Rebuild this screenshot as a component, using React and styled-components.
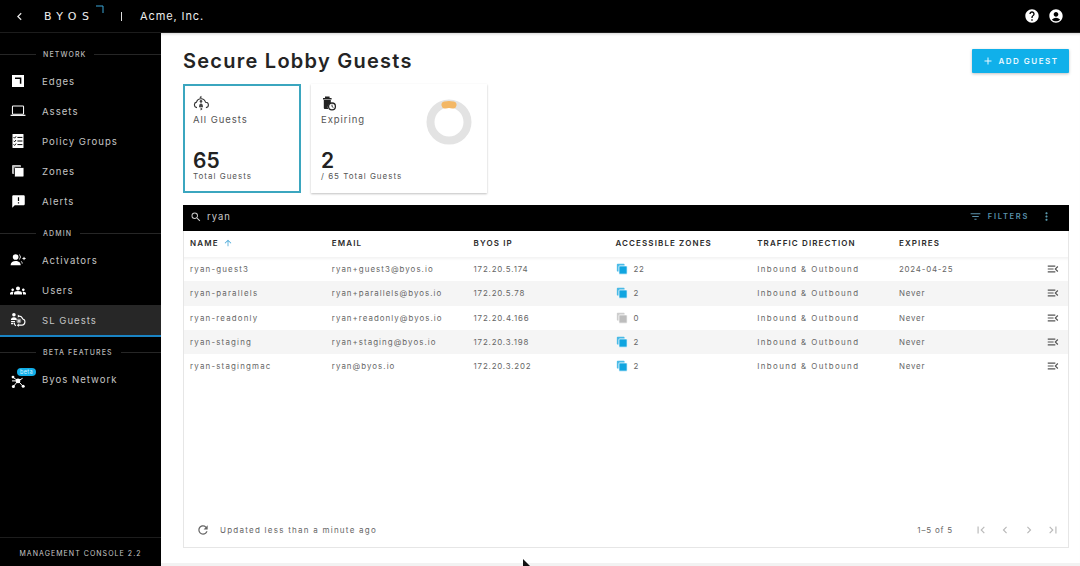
import React from "react";
import styled, { createGlobalStyle } from "styled-components";
import {
  MdAccountCircle,
  MdAdd,
  MdAnnouncement,
  MdArrowUpward,
  MdChevronLeft,
  MdChevronRight,
  MdFilterList,
  MdFirstPage,
  MdGroups,
  MdHelp,
  MdLastPage,
  MdMenuOpen,
  MdMoreVert,
  MdRefresh,
  MdSearch,
} from "react-icons/md";

const GlobalStyle = createGlobalStyle`
  html, body {
    margin: 0;
    padding: 0;
    background: #fff;
    font-family: Inter, "Open Sans", "Liberation Sans", sans-serif;
  }
  * { box-sizing: border-box; }
`;

const EdgeIcon = () => (
  <svg width="14" height="14" viewBox="0 0 14 14">
    <rect x="1" y="1" width="12" height="12" fill="#fff" />
    <path d="M4 4.2h5.6v5.6" fill="none" stroke="#000" strokeWidth="1.5" />
  </svg>
);

const LaptopIcon = () => (
  <svg width="17" height="14" viewBox="0 0 17 14">
    <rect x="2.6" y="1.6" width="11.8" height="8.8" rx="0.8" fill="none" stroke="#fff" strokeWidth="1.1" />
    <path d="M0.6 11.6h15.8" stroke="#fff" strokeWidth="1.3" />
  </svg>
);

const PolicyIcon = () => (
  <svg width="14" height="16" viewBox="0 0 14 16">
    <rect x="1.5" y="1" width="11" height="14" rx="0.6" fill="#fff" />
    <path
      d="M6.4 4.4h5M6.4 8h5M6.4 11.6h5M2.6 4.2l1 1 1.4-1.8M2.6 7.8l1 1 1.4-1.8M2.6 11.4l1 1 1.4-1.8"
      fill="none"
      stroke="#000"
      strokeWidth="1"
    />
  </svg>
);

const ZoneIcon = ({ color = "#fff", size = 14, gap = "#000" }) => (
  <svg width={size} height={size} viewBox="0 0 14 14">
    <rect x="1" y="1" width="9" height="9" rx="1" fill={color} opacity="0.75" />
    <rect x="3.4" y="3.4" width="9.6" height="9.6" rx="1" fill={color} stroke={gap} strokeWidth="0.9" />
  </svg>
);

const ActivatorIcon = () => (
  <svg width="17" height="14" viewBox="0 0 17 14" fill="#fff">
    <circle cx="6" cy="3.8" r="3" />
    <path d="M0.6 12.6c0-3 2.4-4.6 5.4-4.6s5.4 1.6 5.4 4.6z" />
    <path d="M9.6 1.2a3 3 0 0 1 0 5.2M12 8.4c.6.6 1 1.4 1 2.4" fill="none" stroke="#fff" strokeWidth="0.9" />
    <path d="M13.2 5.4h3.4M14.9 3.7v3.4" stroke="#fff" strokeWidth="1" />
  </svg>
);

const GuestNavIcon = () => (
  <svg width="18" height="18" viewBox="0 0 18 18" fill="#fff">
    <circle cx="4.4" cy="3.2" r="2" />
    <path d="M1 9c0-2 1.4-3 3.4-3s3.4 1 3.4 3z" />
    <path
      d="M6.6 15.6a4.8 4.8 0 0 1-1.8-3.4M9.4 4.6a5 5 0 0 1 5 3.4c1.8.6 2.6 1.8 2.4 3.4-.2 1.8-1.6 3.2-3.4 3.4H9"
      fill="none"
      stroke="#fff"
      strokeWidth="1.2"
    />
    <path d="M8.8 2.8v3.8l2-1.9zM9.8 13v3.8l-2-1.9z" />
    <circle cx="10" cy="10.2" r="2.8" fill="#8a8a8a" />
    <rect x="8.8" y="9" width="2.4" height="2.4" fill="#ddd" />
    <path d="M1.2 10h4.4v1.4H1.2zM1.2 12.4h2.6v1.4H1.2z" />
  </svg>
);

const CloudGuestIcon = () => (
  <svg width="16" height="16" viewBox="0 0 16 16">
    <path
      d="M4 12.6a2.8 2.8 0 0 1-.5-5.5 4.7 4.7 0 0 1 9 .1 2.7 2.7 0 0 1 .4 5.4"
      fill="none"
      stroke="#333"
      strokeWidth="1.1"
    />
    <path d="M6.4 2.2l2-1.4v2.8zM9.6 14l-2 1.4v-2.8z" fill="#333" />
    <circle cx="8" cy="6.4" r="1.3" fill="#444" />
    <path d="M6 12.2c0-2.4.7-3.8 2-3.8s2 1.4 2 3.8z" fill="#444" />
  </svg>
);

const ExpiringIcon = () => (
  <svg width="16" height="16" viewBox="0 0 16 16">
    <path d="M2 3h8.6v1.4H2zM4 1.4h4.6V3H4z" fill="#222" />
    <path d="M2.8 5h7v3.2a4 4 0 0 0-2.6 5.8H3.8a1 1 0 0 1-1-1z" fill="#222" />
    <circle cx="11" cy="11.4" r="3.4" fill="#fff" stroke="#222" strokeWidth="1.3" />
    <path d="M11 9.6v2l1.4.8" fill="none" stroke="#222" strokeWidth="0.9" />
  </svg>
);

const NetworkIcon = () => (
  <svg width="15" height="15" viewBox="0 -1.5 15 15" fill="#fff" stroke="#fff" overflow="visible">
    <path d="M7 7.4L1.8 3.6M7 7.4l4.6-2.6M7 7.4L2.4 13M7 7.4l5 5.4M7 7.4H1" strokeWidth="1" />
    <circle cx="7" cy="7.4" r="2.4" stroke="none" />
    <circle cx="2" cy="3.6" r="1.4" stroke="none" />
    <circle cx="2.4" cy="13" r="1.5" stroke="none" />
    <circle cx="12.2" cy="12.8" r="1.5" stroke="none" />
  </svg>
);

const Page = styled.div`
  position: relative;
  width: 1080px;
  height: 566px;
  overflow: hidden;
  display: grid;
  grid-template-rows: 33px 1fr;
  grid-template-columns: 161px 1fr;
  background: #f2f2f2;
`;

const TopBar = styled.header`
  grid-column: 1 / 3;
  display: flex;
  align-items: center;
  background: #000;
  color: #fff;
  padding: 0 16px 0 12px;
  border-bottom: 1px solid #1c1c1c;
`;

const BackButton = styled.span`
  display: flex;
  width: 16px;
  font-size: 15px;
  margin-right: 16px;
  color: #e8e8e8;
`;

const Logo = styled.div`
  position: relative;
  width: 59px;
  font-family: "DejaVu Sans", sans-serif;
  font-size: 11px;
  font-weight: 400;
  letter-spacing: 5.4px;
  line-height: 1;
  color: #eee;

  svg {
    position: absolute;
    right: -1px;
    top: -6px;
  }
`;

const Pipe = styled.span`
  margin-left: 18px;
  width: 1px;
  height: 9px;
  background: #ddd;
`;

const Company = styled.span`
  margin-left: 18px;
  font-size: 11px;
  font-weight: 400;
  letter-spacing: 0.9px;
  color: #ececec;
`;

const TopActions = styled.div`
  margin-left: auto;
  display: flex;
  align-items: center;
  gap: 8px;
  font-size: 16px;

  svg {
    display: block;
  }
`;

const Sidebar = styled.nav`
  background: #000;
  color: #c4c4c4;
  display: flex;
  flex-direction: column;
  padding-top: 15px;
`;

const SectionLabel = styled.div`
  display: flex;
  align-items: center;
  height: 12px;
  font-size: 7px;
  font-weight: 500;
  letter-spacing: 1.1px;
  color: #b8b8b8;
  margin-top: ${(p) => p.$top || 0}px;
  margin-bottom: ${(p) => p.$bottom}px;

  &::before {
    content: "";
    width: 36px;
    height: 1px;
    background: #262626;
    margin-right: 7px;
  }

  &::after {
    content: "";
    flex: 1;
    height: 1px;
    background: #262626;
    margin-left: 8px;
  }
`;

const NavItem = styled.div`
  position: relative;
  display: flex;
  align-items: center;
  height: 30px;
  padding-left: 10px;
  font-size: 9.6px;
  letter-spacing: 1px;
  background: ${(p) => (p.$active ? "#272727" : "transparent")};
`;

const NavIcon = styled.span`
  position: relative;
  display: flex;
  justify-content: center;
  width: 16px;
  margin-right: 16px;
  font-size: ${(p) => p.$size || 17}px;
  color: #fff;
`;

const ActiveLine = styled.div`
  height: 2px;
  margin-right: -1px;
  background: #1a84c4;
`;

const BetaBadge = styled.span`
  position: absolute;
  top: -4px;
  left: 7px;
  width: 19px;
  height: 8px;
  border-radius: 5px;
  background: #12aee8;
  color: #d8f3ff;
  font-size: 5.5px;
  line-height: 8px;
  text-align: center;
  letter-spacing: 0.4px;
`;

const SidebarFooter = styled.div`
  margin-top: auto;
  height: 29px;
  padding-top: 2px;
  border-top: 1px solid #1d1d1d;
  display: flex;
  align-items: center;
  justify-content: center;
  font-size: 7px;
  letter-spacing: 1.05px;
  color: #c8c8c8;
`;

const Main = styled.main`
  display: flex;
  flex-direction: column;
  background: #fff;
  padding: 16px 11px 15px 22px;
  margin-bottom: 3px;
  box-shadow: inset 0 3px 3px -2px rgba(0, 0, 0, 0.18);
`;

const TitleRow = styled.div`
  display: flex;
  align-items: flex-start;
  justify-content: space-between;
  height: 35px;
`;

const Title = styled.h1`
  margin: 0;
  font-size: 20px;
  line-height: 24px;
  font-weight: 600;
  letter-spacing: 1.25px;
  color: #242424;
`;

const AddButton = styled.button`
  display: flex;
  align-items: center;
  justify-content: center;
  gap: 4px;
  width: 97px;
  height: 24px;
  border: 0;
  border-radius: 1px;
  background: #10b0ea;
  color: #e8f8ff;
  font-family: inherit;
  font-size: 8px;
  font-weight: 600;
  letter-spacing: 1.5px;
  box-shadow: 0 1px 3px rgba(0, 0, 0, 0.25);

  svg {
    font-size: 12px;
  }
`;

const Cards = styled.section`
  display: flex;
  gap: 10px;
  height: 109px;
  margin-bottom: 12px;
`;

const Card = styled.div`
  position: relative;
  display: flex;
  flex-direction: column;
  width: ${(p) => p.$width}px;
  padding: ${(p) => (p.$selected ? "9px 8px 9px" : "11px 10px 11px")};
  border: ${(p) => (p.$selected ? "2px solid #3ba6bf" : "0")};
  box-shadow: ${(p) => (p.$selected ? "none" : "0 1px 2px rgba(0,0,0,0.25)")};
`;

const CardName = styled.div`
  margin-top: 3px;
  font-size: 9.5px;
  letter-spacing: 0.95px;
  color: #555;
`;

const CardValue = styled.div`
  margin-top: auto;
  font-size: 21px;
  line-height: 22px;
  font-weight: 600;
  color: #222;
`;

const CardNote = styled.div`
  margin-top: -1px;
  font-size: 8px;
  line-height: 11px;
  letter-spacing: 1px;
  color: #555;
`;

const Donut = styled.svg`
  position: absolute;
  top: 15px;
  right: 15px;
`;

const TableCard = styled.section`
  flex: 1;
  display: flex;
  flex-direction: column;
  border: 1px solid #e6e6e6;
  border-top: 0;
`;

const TableBar = styled.div`
  display: flex;
  align-items: center;
  height: 26px;
  margin: 0 -1px;
  padding: 0 16px 3px 7px;
  background: #000;
  color: #c9c9c9;
`;

const SearchText = styled.span`
  margin-left: 5px;
  font-size: 9.5px;
  letter-spacing: 1px;
`;

const FilterButton = styled.span`
  margin-left: auto;
  display: flex;
  align-items: center;
  gap: 6px;
  color: #5b93ad;
  font-size: 7.5px;
  font-weight: 600;
  letter-spacing: 1.7px;

  svg {
    font-size: 13px;
  }
`;

const MoreButton = styled.span`
  display: flex;
  margin-left: 11px;
  font-size: 13px;
  color: #5b9cb0;
`;

const Row = styled.div`
  display: grid;
  grid-template-columns: repeat(5, 141.8px) 1fr 22px;
  align-items: center;
  height: ${(p) => (p.$head ? 26 : 24.3)}px;
  padding: ${(p) => (p.$head ? "0 0 2px 6px" : "0 0 0 6px")};
  background: ${(p) => (p.$shade ? "#f5f5f5" : "#fff")};
  box-shadow: ${(p) => (p.$first ? "inset 0 4px 3px -2px #f3f3f3" : "none")};
  color: #666;
  font-size: 7.9px;
`;

const Cell = styled.div`
  letter-spacing: ${(p) => p.$spacing}px;
`;

const HeadCell = styled.div`
  display: flex;
  align-items: center;
  gap: 4px;
  color: #2b2b2b;
  font-size: 8px;
  font-weight: 600;
  letter-spacing: 1.12px;

  svg {
    font-size: 10px;
    color: #4aa9d9;
  }
`;

const ZoneCell = styled.div`
  display: flex;
  align-items: center;
  gap: 5px;
  padding-left: 1px;
  letter-spacing: 0.8px;
`;

const RowAction = styled.span`
  display: flex;
  font-size: 14px;
  color: #555;
`;

const TableFooter = styled.div`
  margin-top: auto;
  display: flex;
  align-items: center;
  height: 36px;
  padding: 2px 8px 0 12px;
  color: #666;
  font-size: 8px;
  letter-spacing: 1.25px;
`;

const Refresh = styled.span`
  display: flex;
  font-size: 14px;
  color: #666;
  margin-right: 10px;
`;

const PageInfo = styled.span`
  margin-left: auto;
  margin-right: 21px;
  letter-spacing: 0.8px;
`;

const Pager = styled.span`
  display: flex;
  gap: 10px;
  font-size: 14px;
  color: #b9b9b9;
`;

const Cursor = styled.svg`
  position: absolute;
  left: 522px;
  top: 559px;
`;

const guests = [
  ["ryan-guest3", "ryan+guest3@byos.io", "172.20.5.174", 22, "2024-04-25"],
  ["ryan-parallels", "ryan+parallels@byos.io", "172.20.5.78", 2, "Never"],
  ["ryan-readonly", "ryan+readonly@byos.io", "172.20.4.166", 0, "Never"],
  ["ryan-staging", "ryan+staging@byos.io", "172.20.3.198", 2, "Never"],
  ["ryan-stagingmac", "ryan@byos.io", "172.20.3.202", 2, "Never"],
];

const App = () => {
  return (
    <Page>
      <GlobalStyle />
      <TopBar>
        <BackButton>
          <MdChevronLeft />
        </BackButton>
        <Logo>
          BYOS
          <svg width="8" height="8" viewBox="0 0 8 8">
            <path d="M0 1h7v7" fill="none" stroke="#3aa6d8" strokeWidth="1" />
          </svg>
        </Logo>
        <Pipe />
        <Company>Acme, Inc.</Company>
        <TopActions>
          <MdHelp />
          <MdAccountCircle />
        </TopActions>
      </TopBar>

      <Sidebar>
        <SectionLabel $bottom={6}>NETWORK</SectionLabel>
        <NavItem>
          <NavIcon><EdgeIcon /></NavIcon>Edges
        </NavItem>
        <NavItem>
          <NavIcon><LaptopIcon /></NavIcon>Assets
        </NavItem>
        <NavItem>
          <NavIcon><PolicyIcon /></NavIcon>Policy Groups
        </NavItem>
        <NavItem>
          <NavIcon><ZoneIcon /></NavIcon>Zones
        </NavItem>
        <NavItem>
          <NavIcon $size={15}><MdAnnouncement /></NavIcon>Alerts
        </NavItem>

        <SectionLabel $top={11} $bottom={6}>ADMIN</SectionLabel>
        <NavItem>
          <NavIcon><ActivatorIcon /></NavIcon>Activators
        </NavItem>
        <NavItem>
          <NavIcon><MdGroups /></NavIcon>Users
        </NavItem>
        <NavItem $active>
          <NavIcon><GuestNavIcon /></NavIcon>SL Guests
        </NavItem>
        <ActiveLine />

        <SectionLabel $top={9} $bottom={6}>BETA FEATURES</SectionLabel>
        <NavItem>
          <NavIcon>
            <NetworkIcon />
            <BetaBadge>beta</BetaBadge>
          </NavIcon>
          Byos Network
        </NavItem>

        <SidebarFooter>MANAGEMENT CONSOLE 2.2</SidebarFooter>
      </Sidebar>

      <Main>
        <TitleRow>
          <Title>Secure Lobby Guests</Title>
          <AddButton>
            <MdAdd />
            ADD GUEST
          </AddButton>
        </TitleRow>

        <Cards>
          <Card $selected $width={118}>
            <CloudGuestIcon />
            <CardName>All Guests</CardName>
            <CardValue>65</CardValue>
            <CardNote>Total Guests</CardNote>
          </Card>
          <Card $width={176}>
            <ExpiringIcon />
            <CardName>Expiring</CardName>
            <CardValue>2</CardValue>
            <CardNote>/ 65 Total Guests</CardNote>
            <Donut width="46" height="46" viewBox="0 0 46 46">
              <circle cx="23" cy="23" r="18.5" fill="none" stroke="#e3e3e3" strokeWidth="8" />
              <path
                d="M19 6a18.5 18.5 0 0 1 8 0"
                fill="none"
                stroke="#f3b765"
                strokeWidth="7"
                strokeLinecap="round"
              />
            </Donut>
          </Card>
        </Cards>

        <TableCard>
          <TableBar>
            <MdSearch size={12} />
            <SearchText>ryan</SearchText>
            <FilterButton>
              <MdFilterList />
              FILTERS
            </FilterButton>
            <MoreButton>
              <MdMoreVert />
            </MoreButton>
          </TableBar>
          <Row $head>
            <HeadCell>NAME <MdArrowUpward /></HeadCell>
            <HeadCell>EMAIL</HeadCell>
            <HeadCell>BYOS IP</HeadCell>
            <HeadCell>ACCESSIBLE ZONES</HeadCell>
            <HeadCell>TRAFFIC DIRECTION</HeadCell>
            <HeadCell>EXPIRES</HeadCell>
          </Row>
          {guests.map(([name, email, ip, zones, expires], i) => (
            <Row key={name} $shade={i % 2 === 1} $first={i === 0}>
              <Cell $spacing={1.2}>{name}</Cell>
              <Cell $spacing={1.05}>{email}</Cell>
              <Cell $spacing={0.82}>{ip}</Cell>
              <ZoneCell>
                <ZoneIcon color={zones ? "#10a5e0" : "#bdbdbd"} size={12} gap="#fff" />
                {zones}
              </ZoneCell>
              <Cell $spacing={1.4}>Inbound &amp; Outbound</Cell>
              <Cell $spacing={0.8}>{expires}</Cell>
              <RowAction><MdMenuOpen /></RowAction>
            </Row>
          ))}
          <TableFooter>
            <Refresh><MdRefresh /></Refresh>
            Updated less than a minute ago
            <PageInfo>1–5 of 5</PageInfo>
            <Pager>
              <MdFirstPage />
              <MdChevronLeft />
              <MdChevronRight />
              <MdLastPage />
            </Pager>
          </TableFooter>
        </TableCard>
      </Main>

      <Cursor width="9" height="8" viewBox="0 0 9 8">
        <path d="M1 0l7 7H1z" fill="#111" />
      </Cursor>
    </Page>
  );
};

export default App;
